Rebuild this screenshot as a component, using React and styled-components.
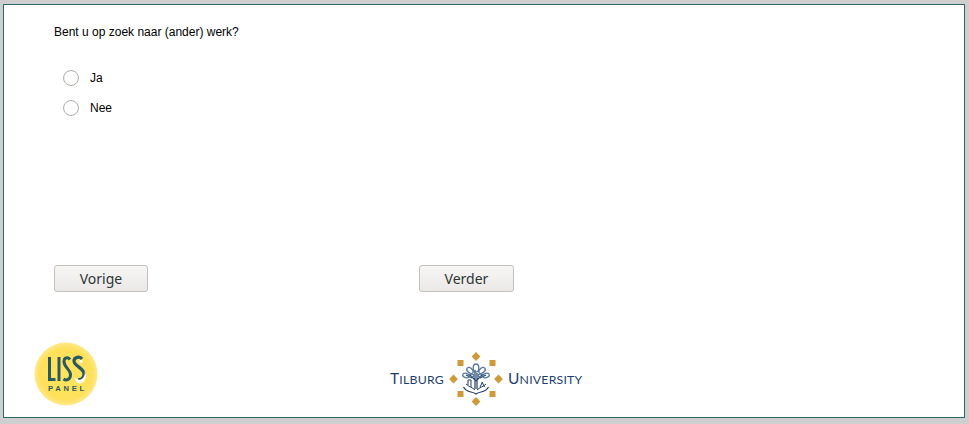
import React from "react";
import styled, { createGlobalStyle } from "styled-components";

const Global = createGlobalStyle`
  html, body { margin: 0; padding: 0; background: #cfcfcf; }
  body { width: 969px; height: 424px; overflow: hidden; }
`;

const Page = styled.div`
  box-sizing: border-box;
  width: 969px;
  height: 424px;
  padding: 4px 4px 6px 3px;
`;

const Panel = styled.main`
  box-sizing: border-box;
  width: 962px;
  height: 414px;
  background: #fff;
  border: 1px solid #2b686b;
  display: flex;
  flex-direction: column;
  padding: 20px 0 10px 30px;
  font-family: "Liberation Sans", Arial, sans-serif;
  color: #000;
`;

const Question = styled.p`
  margin: 0 0 0 20px;
  font-size: 12px;
  line-height: 15px;
`;

const Options = styled.div`
  margin: 30px 0 0 29px;
  display: flex;
  flex-direction: column;
  gap: 14px;
`;

const Option = styled.label`
  display: flex;
  align-items: center;
  gap: 11px;
  height: 16px;
  font-size: 12px;
`;

const Radio = styled.span`
  box-sizing: border-box;
  width: 16px;
  height: 16px;
  border-radius: 50%;
  border: 1px solid #b5b0aa;
  background: #fff;
  box-shadow: inset 0 0 1px #ddd;
`;

const Nav = styled.div`
  margin: 149px 0 0 20px;
  display: flex;
`;

const Button = styled.button`
  box-sizing: border-box;
  width: ${(p) => p.$w}px;
  height: 27px;
  margin-right: ${(p) => p.$gap || 0}px;
  padding: 0;
  border: 1px solid #c4c0ba;
  border-radius: 3px;
  background: linear-gradient(#f7f6f5, #ebe9e7);
  color: #2e3436;
  font-family: "Noto Sans", "Open Sans", sans-serif;
  font-size: 14px;
`;

const Footer = styled.footer`
  margin-top: auto;
  display: flex;
  align-items: flex-start;
`;

const LissLogo = styled.svg`
  width: 64px;
  height: 64px;
  display: block;
`;

const TilburgGroup = styled.div`
  margin: 9px 0 0 292px;
  display: grid;
  grid-template-columns: 57.5px 56px auto;
  align-items: center;
  color: #1f3f6b;
  font-family: "Lato", "Open Sans", sans-serif;
  line-height: 1;
`;

const Word = styled.span`
  margin-left: ${(p) => p.$inset || 0}px;
  font-size: 12.3px;
  letter-spacing: 0.2px;
  text-transform: uppercase;
  white-space: nowrap;
`;

const Initial = styled.span`
  font-size: 15.5px;
`;

const Seal = styled.svg`
  width: 56px;
  height: 56px;
  display: block;
`;

const Gold = "#cf9a3a";
const Navy = "#1f3f6b";
const Teal = "#2a5a60";

function Liss() {
  return (
    <LissLogo viewBox="0 0 64 64">
      <defs>
        <radialGradient id="lg" cx="50%" cy="50%" r="52%">
          <stop offset="0%" stopColor="#ffe35f" />
          <stop offset="78%" stopColor="#ffe05a" />
          <stop offset="100%" stopColor="#ffeb94" />
        </radialGradient>
      </defs>
      <circle cx="32" cy="32" r="31.5" fill="url(#lg)" />
      <g fill="none" stroke={Teal} strokeWidth="3">
        <path d="M15.5 15v22.500h6" />
        <path d="M25 15v24" />
        <path d="M36 17.500c-2-2.500-6-2.500-6 2c0 6 6.500 8 6.500 13c0 5-4 6.500-7 4.500" />
        <path d="M48 17c-2-3-8-2-8 2c0 5 10 7 10 13c0 4-3 6-6 5.500" strokeWidth="3.200" />
      </g>
      <path d="M40 35c3 3 6 4 9 1c2-2 2-5 1.500-7c3 5 1 11-4 12.500c-3 0.500-5-2-6.500-6.500z" fill="#fff" />
      <circle cx="47" cy="19.500" r="1.600" fill="#fff" />
      <text x="14" y="48.500" fontFamily="'Liberation Sans', sans-serif" fontWeight="700" fontSize="7.6" letterSpacing="2.750" fill={Teal}>PANEL</text>
    </LissLogo>
  );
}

function TilburgSeal() {
  const d = (cx, cy) => (
    <rect key={cx + "-" + cy} x={cx - 3.1} y={cy - 3.1} width="6.2" height="6.2" fill={Gold} transform={`rotate(45 ${cx} ${cy})`} />
  );
  const s = (x, y) => <rect key={x + "_" + y} x={x} y={y} width="6" height="6" fill={Gold} />;
  return (
    <Seal viewBox="0 0 56 56">
      {d(28, 5.500)}{d(28, 50.500)}{d(5.500, 28)}{d(50.500, 28)}
      {s(9.500, 9)}{s(41.500, 9)}{s(9.500, 40)}{s(41.500, 40)}
      <g fill="none" stroke={Navy} strokeWidth="1.200">
        <path d="M27 38V19M29 38V22M28 30l-6-6M28 30l6-6M24 27l-6-3M32 27l6-3" />
        <path d="M15.500 36c3 6 8.500 4 12.500 7c4-3 9.500-1 12.500-7" />
        <path d="M18 33c3 3 6 3 9 6M38 33c-3 3-6 3-9 6" strokeWidth="1" />
        <path d="M20 34v-5h3v7M34 31l2.500 5M32 36l2.500-5" strokeWidth="1" />
      </g>
      <g fill="none" stroke="#56789f" strokeWidth="1.300">
        <ellipse cx="28" cy="17" rx="2.800" ry="4" />
        <ellipse cx="22" cy="19.500" rx="3.600" ry="2.400" transform="rotate(40 22 19.500)" />
        <ellipse cx="34" cy="19.500" rx="3.600" ry="2.400" transform="rotate(-40 34 19.500)" />
        <ellipse cx="18" cy="24.500" rx="3.400" ry="2.100" transform="rotate(15 18 24.500)" />
        <ellipse cx="38" cy="24.500" rx="3.400" ry="2.100" transform="rotate(-15 38 24.500)" />
        <ellipse cx="23.500" cy="24.500" rx="2.300" ry="1.400" />
        <ellipse cx="32.500" cy="24.500" rx="2.300" ry="1.400" />
      </g>
    </Seal>
  );
}

export default function App() {
  return (
    <>
      <Global />
      <Page>
        <Panel>
          <Question>Bent u op zoek naar (ander) werk?</Question>
          <Options>
            <Option><Radio />Ja</Option>
            <Option><Radio />Nee</Option>
          </Options>
          <Nav>
            <Button $w={94} $gap={271}>Vorige</Button>
            <Button $w={95}>Verder</Button>
          </Nav>
          <Footer>
            <Liss />
            <TilburgGroup>
              <Word><Initial>T</Initial>ilburg</Word>
              <TilburgSeal />
              <Word $inset={4.5}><Initial>U</Initial>niversity</Word>
            </TilburgGroup>
          </Footer>
        </Panel>
      </Page>
    </>
  );
}
